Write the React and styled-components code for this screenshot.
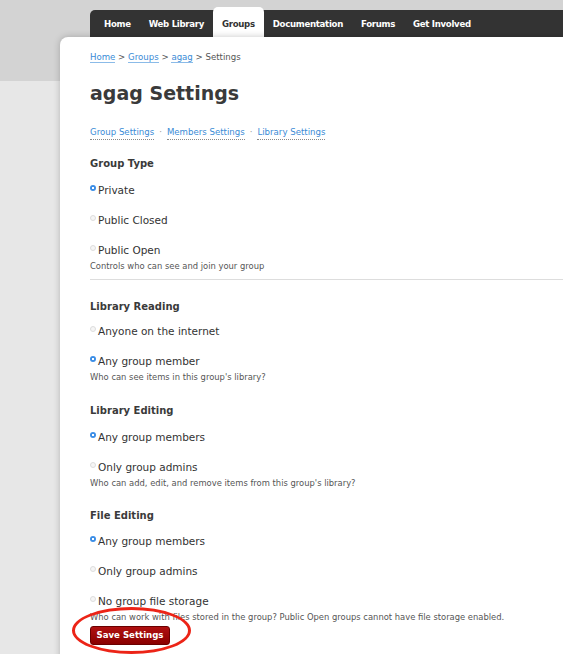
import React from "react";
import styled, { createGlobalStyle } from "styled-components";

const GlobalStyle = createGlobalStyle`
  html, body {
    margin: 0;
    padding: 0;
  }
  body {
    font-family: "DejaVu Sans", "Lucida Grande", Verdana, sans-serif;
    color: #333;
    background: #e7e7e7;
  }
`;

const Page = styled.div`
  min-height: 100vh;
  display: flex;
  flex-direction: column;
  padding-top: 10px;
  box-sizing: border-box;
  background: linear-gradient(#d3d3d3 0, #d3d3d3 81px, #e7e7e7 81px);
  overflow: hidden;
`;

const Nav = styled.div`
  margin-left: 90px;
  height: 27px;
  background: #333;
  border-top-left-radius: 5px;
  display: flex;
  align-items: flex-end;
  padding-left: 5px;
`;

const Tab = styled.a`
  height: ${(p) => (p.$active ? "30px" : "27px")};
  display: flex;
  align-items: center;
  padding: 0 9px;
  box-sizing: border-box;
  font-size: 8.6px;
  letter-spacing: -0.3px;
  font-weight: bold;
  color: ${(p) => (p.$active ? "#333" : "#fff")};
  background: ${(p) => (p.$active ? "#fff" : "transparent")};
  border-radius: 5px 5px 0 0;
  padding-top: ${(p) => (p.$active ? "3px" : "0")};
  text-decoration: none;
  white-space: nowrap;
`;

const Panel = styled.div`
  flex: 1;
  margin-left: 60px;
  background: #fff;
  border-top-left-radius: 8px;
  box-shadow: 0 0 7px rgba(0, 0, 0, 0.22);
  padding: 14px 0 20px 30px;
`;

const Crumbs = styled.div`
  font-size: 8.6px;
  line-height: 12px;
  color: #555;
`;

const Link = styled.a`
  color: #3a8bd6;
  text-decoration: none;
  border-bottom: 1px solid #8bbbe8;
`;

const Title = styled.h1`
  margin: 17px 0 0;
  font-size: 19px;
  line-height: 26px;
  font-weight: bold;
  color: #3a3a3a;
`;

const SubNav = styled.div`
  margin-top: 20px;
  font-size: 8.6px;
  line-height: 13px;
  color: #999;
  display: flex;
  gap: 5px;
`;

const SubLink = styled.a`
  color: #3a8bd6;
  text-decoration: none;
  border-bottom: 1px dotted #888;
`;

const Section = styled.div`
  margin-top: ${(p) => p.$top || "19px"};
`;

const Heading = styled.h3`
  margin: 0 0 ${(p) => p.$gap || "10px"};
  font-size: 10px;
  line-height: 16px;
  font-weight: bold;
  color: #3a3a3a;
`;

const Options = styled.div`
  display: flex;
  flex-direction: column;
  gap: 14px;
`;

const Option = styled.label`
  display: flex;
  align-items: flex-start;
  font-size: 10.5px;
  line-height: 16px;
  color: #333;
`;

const Radio = styled.input`
  appearance: none;
  width: 6px;
  height: 6px;
  margin: 3px 2px 0 0;
  border-radius: 50%;
  border: 1px solid #ddd;
  background: #f6f6f6;
  box-sizing: border-box;
  &:checked {
    border: none;
    background: radial-gradient(circle, #fff 0 1px, #3c8ee6 1.4px);
  }
`;

const Help = styled.div`
  margin-top: 2px;
  font-size: 8.4px;
  line-height: 12px;
  color: #555;
`;

const Rule = styled.hr`
  margin: 7px 0 0;
  border: none;
  border-top: 1px solid #ddd;
`;

const ButtonWrap = styled.div`
  position: relative;
  display: inline-block;
  margin-top: -1px;
`;

const SaveButton = styled.button`
  width: 80px;
  height: 19px;
  padding: 0;
  border: 1px solid #6a0000;
  border-radius: 3px;
  background: linear-gradient(#b01010, #8a0000);
  color: #fff;
  font-family: "DejaVu Sans", sans-serif;
  font-size: 8.6px;
  font-weight: bold;
  cursor: pointer;
`;

const Circle = styled.span`
  position: absolute;
  left: -18px;
  top: -16px;
  width: 119px;
  height: 47px;
  border: 3px solid #ec2417;
  border-radius: 50%;
  box-sizing: border-box;
  pointer-events: none;
`;

const tabs = ["Home", "Web Library", "Groups", "Documentation", "Forums", "Get Involved"];

const sections = [
  {
    name: "type",
    title: "Group Type",
    options: ["Private", "Public Closed", "Public Open"],
    checked: 0,
    help: "Controls who can see and join your group",
  },
  {
    name: "read",
    title: "Library Reading",
    options: ["Anyone on the internet", "Any group member"],
    checked: 1,
    help: "Who can see items in this group's library?",
  },
  {
    name: "edit",
    title: "Library Editing",
    options: ["Any group members", "Only group admins"],
    checked: 0,
    help: "Who can add, edit, and remove items from this group's library?",
  },
  {
    name: "files",
    title: "File Editing",
    options: ["Any group members", "Only group admins", "No group file storage"],
    checked: 0,
    help: "Who can work with files stored in the group? Public Open groups cannot have file storage enabled.",
  },
];

const SettingsSection = ({ section, top, gap }) => (
  <Section $top={top}>
    <Heading $gap={gap}>{section.title}</Heading>
    <Options>
      {section.options.map((opt, i) => (
        <Option key={opt}>
          <Radio type="radio" name={section.name} defaultChecked={i === section.checked} />
          {opt}
        </Option>
      ))}
    </Options>
    <Help>{section.help}</Help>
  </Section>
);

export default function App() {
  return (
    <Page>
      <GlobalStyle />
      <Nav>
        {tabs.map((t) => (
          <Tab key={t} $active={t === "Groups"}>
            {t}
          </Tab>
        ))}
      </Nav>
      <Panel>
        <Crumbs>
          <Link>Home</Link> &gt; <Link>Groups</Link> &gt; <Link>agag</Link> &gt; Settings
        </Crumbs>
        <Title>agag Settings</Title>
        <SubNav>
          <SubLink>Group Settings</SubLink>·<SubLink>Members Settings</SubLink>·
          <SubLink>Library Settings</SubLink>
        </SubNav>
        <SettingsSection section={sections[0]} top="16px" />
        <Rule />
        <SettingsSection section={sections[1]} top="19px" gap="8px" />
        <SettingsSection section={sections[2]} top="20px" />
        <SettingsSection section={sections[3]} gap="9px" />
        <ButtonWrap>
          <SaveButton>Save Settings</SaveButton>
          <Circle />
        </ButtonWrap>
      </Panel>
    </Page>
  );
}
